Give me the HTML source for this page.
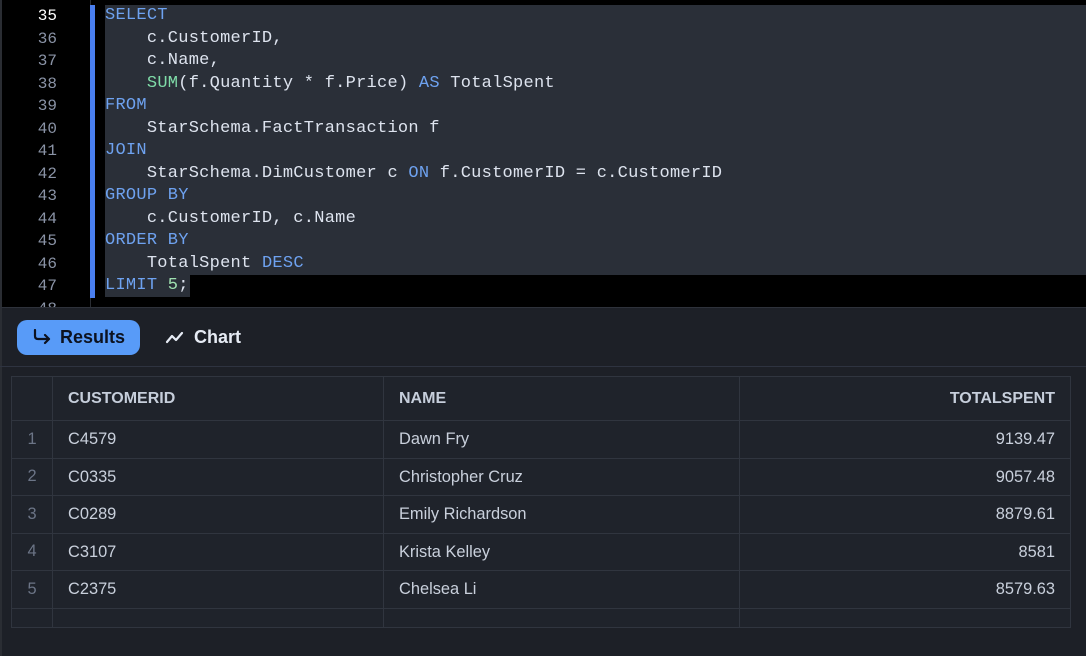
<!DOCTYPE html>
<html><head><meta charset="utf-8"><style>
*{margin:0;padding:0;box-sizing:border-box}
body{width:1086px;height:656px;overflow:hidden;background:#1d2027;font-family:"Liberation Sans",sans-serif;position:relative}
#ed{position:absolute;left:0;top:0;width:1086px;height:307px;background:#000;border-left:2px solid #2a2d33;overflow:hidden}
.ln{position:absolute;left:0;width:55px;text-align:right;font:16px/22.5px "Liberation Mono",monospace;color:#8a93a6}
.code{position:absolute;left:103px;font:17px/22.5px "Liberation Mono",monospace;color:#dde3ee;white-space:pre;letter-spacing:0.26px}
.k{color:#6ea2f0}.f{color:#7fdca8}.n{color:#9fe0b0}
#sel{position:absolute;left:103px;top:5px;width:981px;height:270px;background:#2a2f38}
#sel2{position:absolute;left:103px;top:275px;width:85px;height:22px;background:#2a2f38}
#bar{position:absolute;left:88px;top:5px;width:5px;height:293px;background:#4a7ff0}
#gl{position:absolute;left:88px;top:0;width:1px;height:307px;background:#2a2d33}
#panel{position:absolute;left:0;top:307px;width:1086px;height:349px;background:#1d2027;border-left:2px solid #2a2d33;border-top:1px solid #2e323b}
#tabs{position:absolute;left:0;top:307px;width:1086px;height:60px;border-bottom:1px solid #2e3340}
.btn{position:absolute;top:13px;height:35px;border-radius:10px;font-size:18px;font-weight:bold;line-height:35px;color:#e6ebf4}
table{position:absolute;left:11px;top:376px;width:1060px;border-collapse:collapse;background:#1f232b;font-size:16.4px;color:#c9d0dc}
td{border:1px solid #30353f;height:37.5px;padding:1px 15px 0}
tr.h td{height:44px;font-weight:bold;color:#c6cedb;font-size:16px}
td.i{width:41px;text-align:center;color:#6c7587;padding:0}
td.r{text-align:right}
</style></head><body>
<div id="ed">
<div id="gl"></div>
<div id="sel"></div><div id="sel2"></div>
<div id="bar"></div>
<div class="ln" style="top:5px;color:#fff">35</div>
<div class="ln" style="top:27.5px">36</div>
<div class="ln" style="top:50px">37</div>
<div class="ln" style="top:72.5px">38</div>
<div class="ln" style="top:95px">39</div>
<div class="ln" style="top:117.5px">40</div>
<div class="ln" style="top:140px">41</div>
<div class="ln" style="top:162.5px">42</div>
<div class="ln" style="top:185px">43</div>
<div class="ln" style="top:207.5px">44</div>
<div class="ln" style="top:230px">45</div>
<div class="ln" style="top:252.5px">46</div>
<div class="ln" style="top:275px">47</div>
<div class="ln" style="top:297.5px">48</div>
<div class="code" style="top:5px"><span class="k">SELECT</span>
    c.CustomerID,
    c.Name,
    <span class="f">SUM</span>(f.Quantity * f.Price) <span class="k">AS</span> TotalSpent
<span class="k">FROM</span>
    StarSchema.FactTransaction f
<span class="k">JOIN</span>
    StarSchema.DimCustomer c <span class="k">ON</span> f.CustomerID = c.CustomerID
<span class="k">GROUP BY</span>
    c.CustomerID, c.Name
<span class="k">ORDER BY</span>
    TotalSpent <span class="k">DESC</span>
<span class="k">LIMIT</span> <span class="n">5</span>;</div>
</div>
<div id="panel"></div>
<div id="tabs">
<div class="btn" style="left:17px;width:123px;background:#589bf8;color:#0c1220;padding-left:15px"><svg width="20" height="16" style="vertical-align:-2px;margin-right:8px" viewBox="0 0 20 16"><path d="M3 1v6q0 3 3 3h11M13 6l4 4-4 4" fill="none" stroke="#0c1220" stroke-width="2.2" stroke-linecap="round" stroke-linejoin="round"/></svg>Results</div>
<div class="btn" style="left:165px;width:100px"><svg width="20" height="16" style="vertical-align:-2px;margin-right:9px" viewBox="0 0 20 16"><path d="M2 13l5-6 4 4 6-7" fill="none" stroke="#e6ebf4" stroke-width="2.2" stroke-linecap="round" stroke-linejoin="round"/></svg>Chart</div>
</div>
<table>
<tr class="h"><td class="i"></td><td style="width:331px">CUSTOMERID</td><td style="width:356px">NAME</td><td class="r">TOTALSPENT</td></tr>
<tr><td class="i">1</td><td>C4579</td><td>Dawn Fry</td><td class="r">9139.47</td></tr>
<tr><td class="i">2</td><td>C0335</td><td>Christopher Cruz</td><td class="r">9057.48</td></tr>
<tr><td class="i">3</td><td>C0289</td><td>Emily Richardson</td><td class="r">8879.61</td></tr>
<tr><td class="i">4</td><td>C3107</td><td>Krista Kelley</td><td class="r">8581</td></tr>
<tr><td class="i">5</td><td>C2375</td><td>Chelsea Li</td><td class="r">8579.63</td></tr>
<tr><td class="i" style="height:19px"></td><td style="height:19px"></td><td style="height:19px"></td><td style="height:19px"></td></tr>
</table>
</body></html>
